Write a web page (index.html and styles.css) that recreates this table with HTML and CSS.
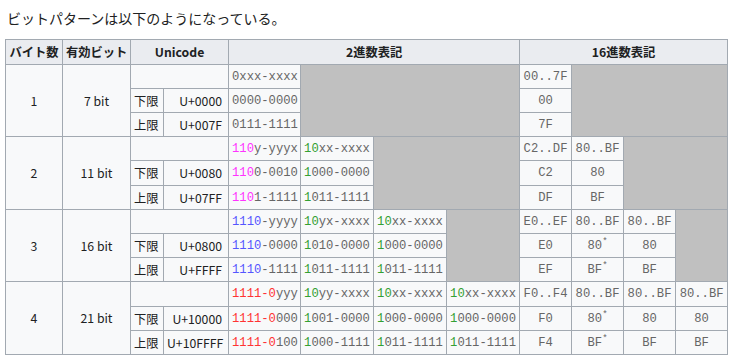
FILE: index.html
```html
<!DOCTYPE html>
<html lang="ja">
<head>
<meta charset="utf-8">
<link rel="stylesheet" href="styles.css">
</head>
<body>
<p class="intro">ビットパターンは以下のようになっている。</p>
<table class="wikitable">
<colgroup>
<col class="c-bytes"><col class="c-bits"><col class="c-lim"><col class="c-cp">
<col class="c-bin1"><col class="c-bin"><col class="c-bin"><col class="c-bin">
<col class="c-hex"><col class="c-hex"><col class="c-hex"><col class="c-hex4">
</colgroup>
<thead>
<tr><th>バイト数</th><th>有効ビット</th><th colspan="2">Unicode</th><th colspan="4">2進数表記</th><th colspan="4">16進数表記</th></tr>
</thead>
<tbody>
<tr class="first">
<td rowspan="3" class="num">1</td><td rowspan="3" class="num">7 bit</td><td colspan="2"></td>
<td class="code">0xxx-xxxx</td><td colspan="3" rowspan="3" class="na"></td>
<td class="code">00..7F</td><td colspan="3" rowspan="3" class="na"></td>
</tr>
<tr>
<td class="lim">下限</td><td class="cp">U+0000</td>
<td class="code">0000-0000</td>
<td class="code">00</td>
</tr>
<tr>
<td class="lim">上限</td><td class="cp">U+007F</td>
<td class="code">0111-1111</td>
<td class="code">7F</td>
</tr>

<tr>
<td rowspan="3" class="num">2</td><td rowspan="3" class="num">11 bit</td><td colspan="2"></td>
<td class="code"><span class="mg">110</span>y-yyyx</td><td class="code"><span class="gr">10</span>xx-xxxx</td><td colspan="2" rowspan="3" class="na"></td>
<td class="code">C2..DF</td><td class="code">80..BF</td><td colspan="2" rowspan="3" class="na"></td>
</tr>
<tr class="tall">
<td class="lim">下限</td><td class="cp">U+0080</td>
<td class="code"><span class="mg">110</span>0-0010</td><td class="code"><span class="gr">1</span>000-0000</td>
<td class="code">C2</td><td class="code">80</td>
</tr>
<tr>
<td class="lim">上限</td><td class="cp">U+07FF</td>
<td class="code"><span class="mg">110</span>1-1111</td><td class="code"><span class="gr">1</span>011-1111</td>
<td class="code">DF</td><td class="code">BF</td>
</tr>

<tr>
<td rowspan="3" class="num">3</td><td rowspan="3" class="num">16 bit</td><td colspan="2"></td>
<td class="code"><span class="bl">1110</span>-yyyy</td><td class="code"><span class="gr">10</span>yx-xxxx</td><td class="code"><span class="gr">10</span>xx-xxxx</td><td rowspan="3" class="na"></td>
<td class="code">E0..EF</td><td class="code">80..BF</td><td class="code">80..BF</td><td rowspan="3" class="na"></td>
</tr>
<tr>
<td class="lim">下限</td><td class="cp">U+0800</td>
<td class="code"><span class="bl">1110</span>-0000</td><td class="code"><span class="gr">1</span>010-0000</td><td class="code"><span class="gr">1</span>000-0000</td>
<td class="code">E0</td><td class="code">80<sup>*</sup></td><td class="code">80</td>
</tr>
<tr>
<td class="lim">上限</td><td class="cp">U+FFFF</td>
<td class="code"><span class="bl">1110</span>-1111</td><td class="code"><span class="gr">1</span>011-1111</td><td class="code"><span class="gr">1</span>011-1111</td>
<td class="code">EF</td><td class="code">BF<sup>*</sup></td><td class="code">BF</td>
</tr>

<tr class="tall">
<td rowspan="3" class="num">4</td><td rowspan="3" class="num">21 bit</td><td colspan="2"></td>
<td class="code"><span class="rd">1111-0</span>yyy</td><td class="code"><span class="gr">10</span>yy-xxxx</td><td class="code"><span class="gr">10</span>xx-xxxx</td><td class="code"><span class="gr">10</span>xx-xxxx</td>
<td class="code">F0..F4</td><td class="code">80..BF</td><td class="code">80..BF</td><td class="code">80..BF</td>
</tr>
<tr>
<td class="lim">下限</td><td class="cp">U+10000</td>
<td class="code"><span class="rd">1111-0</span>000</td><td class="code"><span class="gr">1</span>001-0000</td><td class="code"><span class="gr">1</span>000-0000</td><td class="code"><span class="gr">1</span>000-0000</td>
<td class="code">F0</td><td class="code">80<sup>*</sup></td><td class="code">80</td><td class="code">80</td>
</tr>
<tr>
<td class="lim">上限</td><td class="cp">U+10FFFF</td>
<td class="code"><span class="rd">1111-0</span>100</td><td class="code"><span class="gr">1</span>000-1111</td><td class="code"><span class="gr">1</span>011-1111</td><td class="code"><span class="gr">1</span>011-1111</td>
<td class="code">F4</td><td class="code">BF<sup>*</sup></td><td class="code">BF</td><td class="code">BF</td>
</tr>
</tbody>
</table>
</body>
</html>
```

FILE: styles.css
```css
html, body {
  margin: 0;
  padding: 0;
  background: #ffffff;
}
body {
  padding: 0 5px;
  font-family: "Noto Sans CJK JP", "Noto Sans", sans-serif;
  color: #202122;
  font-size: 14px;
}
.intro {
  margin: 7px 0 10px 2px;
  line-height: 22px;
  font-size: 14px;
}
.wikitable {
  border-collapse: collapse;
  table-layout: fixed;
  width: 722px;
  background: #f8f9fa;
  color: #202122;
  border: 1px solid #a2a9b1;
  font-size: 12.25px;
}
.c-bytes { width: 57px; }
.c-bits { width: 68px; }
.c-lim { width: 33px; }
.c-cp { width: 65px; }
.c-bin1 { width: 72px; }
.c-bin { width: 73px; }
.c-hex { width: 52px; }
.c-hex4 { width: 52px; }
.wikitable th,
.wikitable td {
  border: 1px solid #a2a9b1;
  padding: 0 3px;
  white-space: nowrap;
  overflow: hidden;
}
.wikitable th {
  background: #eaecf0;
  font-weight: bold;
  text-align: center;
  height: 24px;
}
.wikitable tbody tr {
  height: 24px;
}
.wikitable tbody tr.tall {
  height: 25px;
}
.num {
  text-align: center;
}
.lim {
  text-align: left;
  padding-left: 5px;
}
.cp {
  text-align: right;
  padding-right: 6px !important;
}
.code {
  font-family: "Liberation Mono", monospace;
  font-size: 12.2px;
  text-align: center;
  color: #666;
}
.code sup {
  font-size: 9px;
  line-height: 0;
  vertical-align: 5px;
}
.na {
  background: #c0c0c0;
}
.mg { color: #ff33ff; }
.gr { color: #33a033; }
.bl { color: #5555ff; }
.rd { color: #ff3333; }
```
